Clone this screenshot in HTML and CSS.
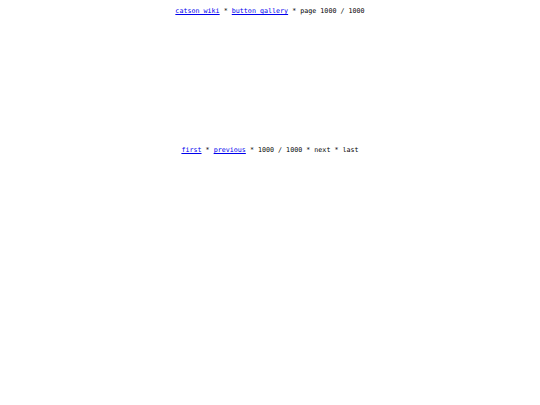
FILE: index.html
```html
<!DOCTYPE html>
<html lang="en">
<head>
    <meta charset="UTF-8">
    <meta name="viewport" content="width=device-width, initial-scale=1.0">
    <title>button gallery - page 1000</title>
    <link rel="stylesheet" href="styles.css">
</head>
<body>
    <nav class="crumbs">
        <a href="#">catson wiki</a> * <a href="#">button gallery</a> * page 1000 / 1000
    </nav>

    <div class="gallery"></div>

    <nav class="pager">
        <a href="#">first</a> * <a href="#">previous</a> * 1000 / 1000 * next * last
    </nav>
</body>
</html>
```

FILE: styles.css
```css
body {
    margin: 0;
    background-color: #ffffff;
    color: #000000;
    font-family: "DejaVu Sans Mono", monospace;
    font-size: 6.7px;
    text-align: center;
}
.crumbs {
    padding-top: 7px;
    line-height: 8px;
}
.gallery {
    height: 131px;
}
.pager {
    line-height: 8px;
}
a {
    color: #0000ee;
}
```
